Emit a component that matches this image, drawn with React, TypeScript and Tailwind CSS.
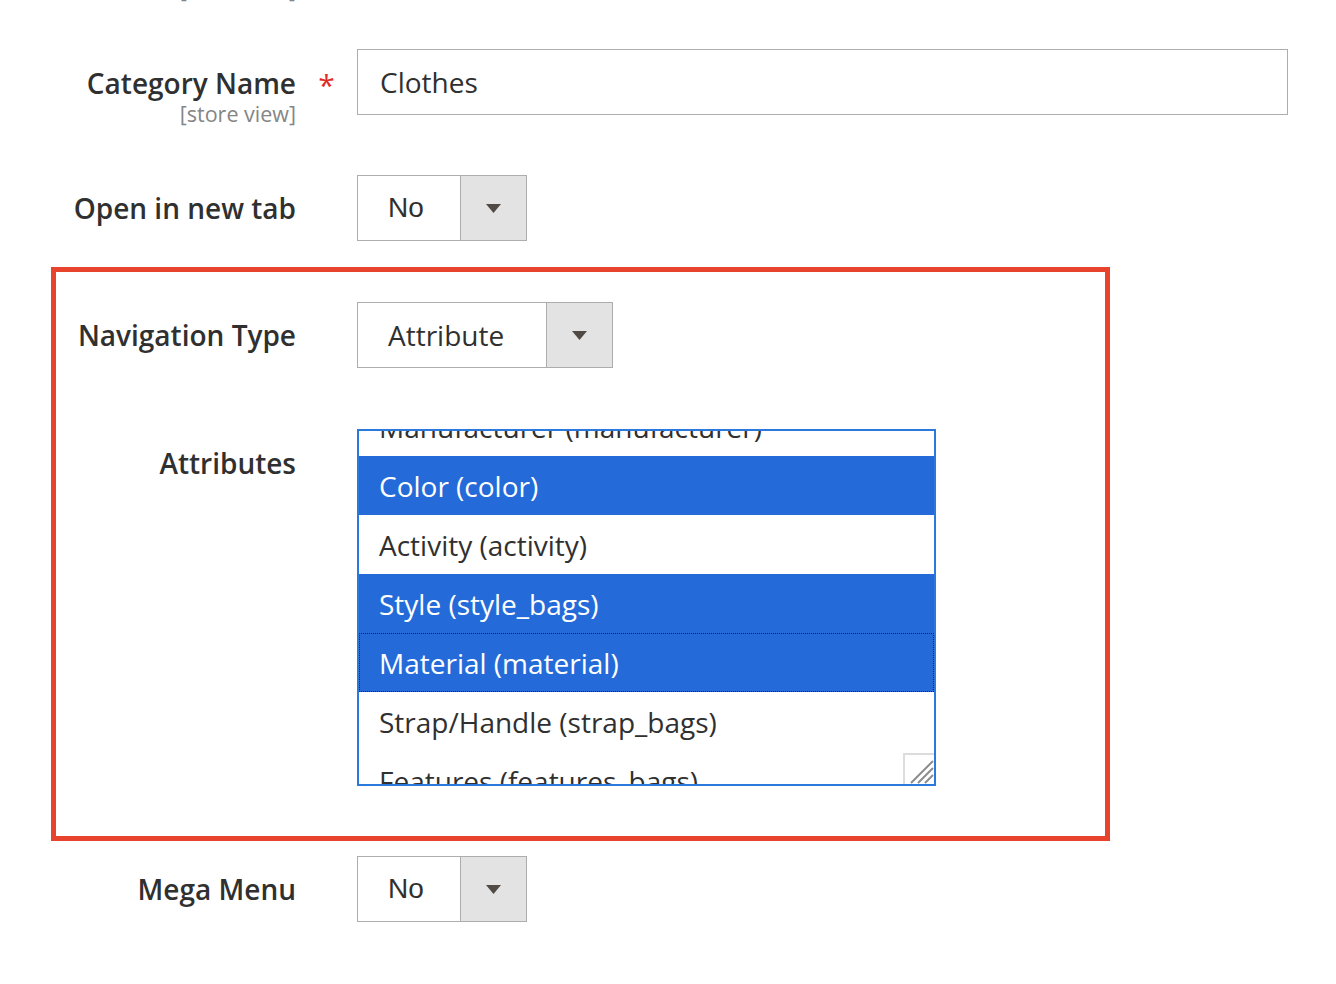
import React from "react"

const attributeOptions = [
  { label: "Manufacturer (manufacturer)", selected: false },
  { label: "Color (color)", selected: true },
  { label: "Activity (activity)", selected: false },
  { label: "Style (style_bags)", selected: true },
  { label: "Material (material)", selected: true, focused: true },
  { label: "Strap/Handle (strap_bags)", selected: false },
  { label: "Features (features_bags)", selected: false },
]

function Caret() {
  return (
    <svg width="15" height="9" viewBox="0 0 15 9">
      <path d="M0 0 L15 0 L7.5 9 Z" fill="#514943" />
    </svg>
  )
}

function Select({ value, className, sans }: { value: string; className: string; sans?: boolean }) {
  return (
    <div className={`flex h-[66px] border border-[#adadad] bg-white ${className}`}>
      <div
        className={`flex flex-1 items-center pl-[30px] text-[#303030] ${
          sans ? "font-['Liberation_Sans',sans-serif] text-[28px]" : "text-[28px]"
        }`}
      >
        {value}
      </div>
      <div className="flex w-[66px] items-center justify-center border-l border-[#adadad] bg-[#e3e3e3]">
        <Caret />
      </div>
    </div>
  )
}

function FieldLabel({ children, width }: { children: React.ReactNode; width: string }) {
  return (
    <div className={`${width} shrink-0 text-right text-[28px] font-semibold leading-[36px] text-[#303030]`}>
      {children}
    </div>
  )
}

function MultiSelect() {
  return (
    <div className="relative h-[357px] w-[579px] overflow-hidden border-2 border-[#2b79dc] bg-white">
      <div className="-mt-[34px]">
        {attributeOptions.map((opt) => (
          <div
            key={opt.label}
            className={`flex h-[59px] items-center text-[28px] ${
              opt.selected ? "bg-[#246bd9] text-white" : "text-[#303030]"
            } ${opt.focused ? "border border-dotted border-[#0d1d63] pl-[19px]" : "pl-[20px]"}`}
          >
            {opt.label}
          </div>
        ))}
      </div>
      {/* resize grip */}
      <div className="absolute bottom-0 right-0 h-[31px] w-[31px] border-l-2 border-t-2 border-[#dcdcdc] bg-white">
        <svg width="29" height="29" viewBox="0 0 29 29" className="absolute right-0 bottom-0">
          <path d="M6 28 L28 6 M13 28 L28 13 M20 28 L28 20" stroke="#8c8c8c" strokeWidth="2" />
        </svg>
      </div>
    </div>
  )
}

export default function App() {
  return (
    <div className="min-h-screen w-[1336px] overflow-hidden bg-white font-['Open_Sans',sans-serif] text-[#303030]">
      {/* scope label of the field above, cut off by the viewport */}
      <div className="-mt-[25px] w-[296px] text-right text-[21.5px] leading-[30px] text-[#858585]">[store view]</div>

      {/* Category Name */}
      <div className="mt-[44px] flex h-[66px] items-start">
        <div className="w-[296px] shrink-0 pt-[16px] text-right">
          <div className="text-[28px] font-semibold leading-[36px]">Category Name</div>
          <div className="mt-[2px] text-[21.5px] leading-[22px] text-[#858585]">[store view]</div>
        </div>
        <div className="w-[61px] shrink-0 pt-[21px] text-center text-[30px] leading-[30px] text-[#e02b27]">*</div>
        <div className="flex h-[66px] w-[931px] items-center border border-[#adadad] pl-[22px] text-[28px]">
          Clothes
        </div>
      </div>

      {/* Open in new tab */}
      <div className="mt-[60px] flex items-center">
        <FieldLabel width="w-[296px]">Open in new tab</FieldLabel>
        <div className="ml-[61px]">
          <Select value="No" className="w-[170px]" sans />
        </div>
      </div>

      {/* highlighted block */}
      <div className="ml-[51px] mt-[26px] w-[1059px] border-[5px] border-[#e8432c] pb-[50px] pt-[30px]">
        <div className="flex items-center">
          <FieldLabel width="w-[240px]">Navigation Type</FieldLabel>
          <div className="ml-[61px]">
            <Select value="Attribute" className="w-[256px]" />
          </div>
        </div>

        <div className="mt-[61px] flex items-start">
          <div className="w-[240px] shrink-0 pt-[16px]">
            <FieldLabel width="w-[240px]">Attributes</FieldLabel>
          </div>
          <div className="ml-[61px]">
            <MultiSelect />
          </div>
        </div>
      </div>

      {/* Mega Menu */}
      <div className="mt-[15px] flex items-center">
        <FieldLabel width="w-[296px]">Mega Menu</FieldLabel>
        <div className="ml-[61px]">
          <Select value="No" className="w-[170px]" sans />
        </div>
      </div>
    </div>
  )
}
